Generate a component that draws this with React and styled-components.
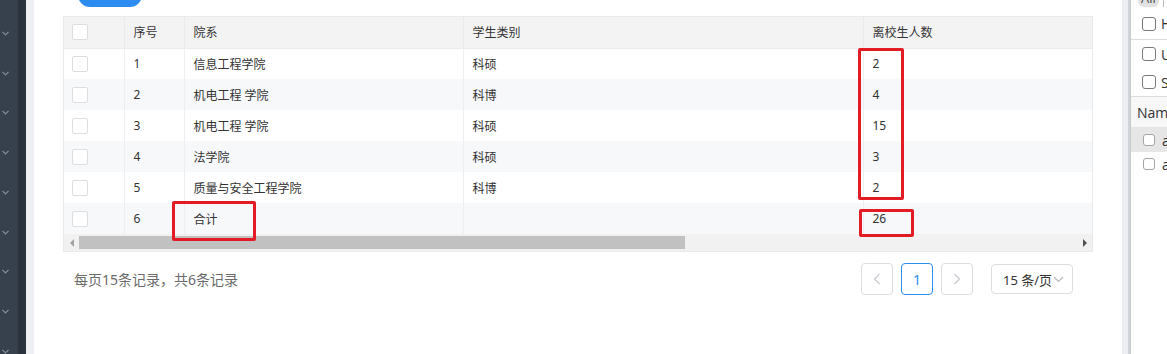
import React from 'react';
import styled, { createGlobalStyle } from 'styled-components';

const GlobalStyle = createGlobalStyle`
  html, body { margin: 0; padding: 0; background: #fff; }
  body { font-family: "Noto Sans", "Noto Sans CJK SC", sans-serif; color: #333; }
  * { box-sizing: border-box; }
`;

const Page = styled.div`
  display: flex;
  width: 1167px;
  height: 354px;
  overflow: hidden;
`;

const Sidebar = styled.aside`
  flex: none;
  width: 26px;
  display: flex;
  background: #36414d;
`;

const SideMenu = styled.div`
  width: 18px;
  display: flex;
  flex-direction: column;
  padding: 31px 0 0 1px;
  gap: 34.5px;
`;

const SideEdge = styled.div`
  width: 8px;
  background: #2b333e;
`;

const Gutter = styled.div`
  flex: none;
  width: 8px;
  background: #eef0f4;
`;

const Main = styled.main`
  flex: none;
  width: 1088px;
  padding: 0 29px;
  background: #fff;
`;

const Toolbar = styled.div`
  height: 8px;
  display: flex;
  padding-left: 15px;
`;

const PrimaryButton = styled.button`
  margin-top: -25px;
  width: 64px;
  height: 32px;
  border: none;
  border-radius: 12px;
  background: #2d8cf0;
`;

const TableWrap = styled.div`
  position: relative;
  margin-top: 8px;
  width: 1030px;
  border: 1px solid #e8eaec;
`;

const Viewport = styled.div`
  width: 100%;
  overflow: hidden;
`;

const Table = styled.table`
  width: 1713px;
  table-layout: fixed;
  border-collapse: collapse;
  font-size: 12px;
  color: #333;
`;

const HeadCell = styled.th`
  height: 31px;
  padding: 0 0 0 ${(p) => (p.$check ? 8 : 9)}px;
  text-align: left;
  font-weight: 400;
  background: #f3f3f3;
  border-right: 1px solid #e8eaec;
  border-bottom: 1px solid #e8eaec;
  white-space: nowrap;
`;

const Row = styled.tr`
  background: ${(p) => (p.$striped ? '#f7f8fa' : '#fff')};
`;

const Cell = styled.td`
  height: 31px;
  padding: 0 0 0 ${(p) => (p.$check ? 8 : 9)}px;
  border-right: 1px solid #eceef1;
  white-space: nowrap;
  vertical-align: middle;
`;

const Check = styled.span`
  display: block;
  width: 16px;
  height: 16px;
  border: 1px solid #dcdee2;
  border-radius: 2px;
  background: #fff;
`;

const ScrollBar = styled.div`
  display: flex;
  height: 17px;
  background: #f1f1f1;
`;

const ScrollArrow = styled.div`
  flex: none;
  width: 15px;
  display: flex;
  align-items: center;
  justify-content: center;
  &::before {
    content: '';
    width: 0;
    height: 0;
    border-top: 4px solid transparent;
    border-bottom: 4px solid transparent;
    ${(p) =>
      p.$dir === 'left'
        ? 'border-right: 4px solid #a3a3a3;'
        : 'border-left: 4px solid #505050;'}
  }
`;

const ScrollTrack = styled.div`
  flex: 1;
  display: flex;
  align-items: center;
`;

const ScrollThumb = styled.div`
  height: 13px;
  background: #c1c1c1;
`;

const Mark = styled.div`
  position: absolute;
  left: ${(p) => p.$x}px;
  top: ${(p) => p.$y}px;
  width: ${(p) => p.$w}px;
  height: ${(p) => p.$h}px;
  border: 3px solid #e21b25;
  border-radius: 2px;
  pointer-events: none;
`;

const Footer = styled.div`
  display: flex;
  align-items: center;
  justify-content: space-between;
  margin-top: 11px;
  padding: 0 20px 0 11px;
  height: 32px;
`;

const Summary = styled.span`
  font-size: 14px;
  color: #6b6b6b;
`;

const Pager = styled.div`
  display: flex;
  align-items: center;
  gap: 8px;
`;

const PageButton = styled.button`
  width: 32px;
  height: 32px;
  padding: 0;
  display: flex;
  align-items: center;
  justify-content: center;
  border: 1px solid ${(p) => (p.$active ? '#2d8cf0' : '#dcdee2')};
  border-radius: 4px;
  background: #fff;
  color: ${(p) => (p.$active ? '#2d8cf0' : '#c5c8ce')};
  font-family: "Noto Sans", sans-serif;
  font-size: 14px;
`;

const SizeSelect = styled.div`
  margin-left: 10px;
  width: 82px;
  height: 30px;
  display: flex;
  align-items: center;
  padding-left: 11px;
  gap: 1px;
  border: 1px solid #dcdee2;
  border-radius: 4px;
  font-size: 13px;
  color: #333;
`;

const RightGutter = styled.div`
  flex: none;
  width: 8px;
  background: #eceef2;
  border-right: 2px solid #d0d3d9;
`;

const RightPanel = styled.section`
  flex: 1;
  min-width: 0;
  overflow: hidden;
  background: #fff;
  border-left: 1px solid #c9c9c9;
  font-family: "Open Sans", "Noto Sans", sans-serif;
  font-size: 14px;
  color: #333;
`;

const TabBar = styled.div`
  height: 8px;
  display: flex;
  align-items: flex-start;
  padding-left: 7px;
  gap: 4px;
`;

const TabPill = styled.span`
  margin-top: -10px;
  height: 17px;
  padding: 0 3px;
  line-height: 17px;
  border-radius: 6px;
  background: #e2e2e2;
  font-size: 13px;
  color: #444;
`;

const TabSep = styled.span`
  width: 1px;
  height: 7px;
  background: #bbb;
`;

const FilterRow = styled.label`
  display: flex;
  align-items: center;
  gap: 5px;
  height: ${(p) => p.$h}px;
  padding-left: 11px;
  border-bottom: ${(p) => (p.$line ? '1px solid #dcdcdc' : 'none')};
  white-space: nowrap;
`;

const NativeBox = styled.span`
  flex: none;
  width: ${(p) => p.$size}px;
  height: ${(p) => p.$size}px;
  border: 1px solid ${(p) => p.$tone};
  border-radius: 3px;
  background: #fff;
`;

const ListHead = styled.div`
  height: 31px;
  display: flex;
  align-items: center;
  padding-left: 6px;
  background: #f7f7f7;
  border-bottom: 1px solid #e4e4e4;
`;

const ListRow = styled.div`
  height: 24px;
  display: flex;
  align-items: center;
  gap: 7px;
  padding-left: 12px;
  background: ${(p) => (p.$selected ? '#e6e6e6' : '#fff')};
`;

const Chevron = () => (
  <svg width="9" height="6" viewBox="0 0 9 6" fill="none">
    <path d="M1 1l3.5 3.5L8 1" stroke="#848c96" strokeWidth="1.5" />
  </svg>
);

const Arrow = ({ dir }) => (
  <svg width="8" height="12" viewBox="0 0 8 12" fill="none">
    <path
      d={dir === 'left' ? 'M6.5 1L1.5 6l5 5' : 'M1.5 1l5 5-5 5'}
      stroke="#c5c8ce"
      strokeWidth="1.2"
    />
  </svg>
);

const DownIcon = () => (
  <svg width="11" height="7" viewBox="0 0 11 7" fill="none">
    <path d="M1 1l4.5 4.5L10 1" stroke="#b5b8be" strokeWidth="1.1" />
  </svg>
);

const rows = [
  { no: 1, dept: '信息工程学院', type: '科硕', count: '2' },
  { no: 2, dept: '机电工程 学院', type: '科博', count: '4' },
  { no: 3, dept: '机电工程 学院', type: '科硕', count: '15' },
  { no: 4, dept: '法学院', type: '科硕', count: '3' },
  { no: 5, dept: '质量与安全工程学院', type: '科博', count: '2' },
  { no: 6, dept: '合计', type: '', count: '26' },
];

export default function App() {
  return (
    <>
      <GlobalStyle />
      <Page>
        <Sidebar>
          <SideMenu>
            {Array.from({ length: 9 }).map((_, i) => (
              <Chevron key={i} />
            ))}
          </SideMenu>
          <SideEdge />
        </Sidebar>
        <Gutter />
        <Main>
          <Toolbar>
            <PrimaryButton aria-label="新增" />
          </Toolbar>
          <TableWrap>
            <Viewport>
              <Table>
                <colgroup>
                  <col style={{ width: 60 }} />
                  <col style={{ width: 60 }} />
                  <col style={{ width: 279 }} />
                  <col style={{ width: 400 }} />
                  <col />
                </colgroup>
                <thead>
                  <tr>
                    <HeadCell $check>
                      <Check />
                    </HeadCell>
                    <HeadCell>序号</HeadCell>
                    <HeadCell>院系</HeadCell>
                    <HeadCell>学生类别</HeadCell>
                    <HeadCell>离校生人数</HeadCell>
                  </tr>
                </thead>
                <tbody>
                  {rows.map((r, i) => (
                    <Row key={r.no} $striped={i % 2 === 1}>
                      <Cell $check>
                        <Check />
                      </Cell>
                      <Cell>{r.no}</Cell>
                      <Cell>{r.dept}</Cell>
                      <Cell>{r.type}</Cell>
                      <Cell>{r.count}</Cell>
                    </Row>
                  ))}
                </tbody>
              </Table>
            </Viewport>
            <ScrollBar>
              <ScrollArrow $dir="left" />
              <ScrollTrack>
                <ScrollThumb style={{ width: 606 }} />
              </ScrollTrack>
              <ScrollArrow $dir="right" />
            </ScrollBar>
            <Mark $x={794} $y={31} $w={46} $h={152} />
            <Mark $x={795} $y={192} $w={55} $h={28} />
            <Mark $x={108} $y={184} $w={84} $h={40} />
          </TableWrap>
          <Footer>
            <Summary>每页15条记录，共6条记录</Summary>
            <Pager>
              <PageButton aria-label="上一页">
                <Arrow dir="left" />
              </PageButton>
              <PageButton $active>1</PageButton>
              <PageButton aria-label="下一页">
                <Arrow dir="right" />
              </PageButton>
              <SizeSelect>
                15 条/页
                <DownIcon />
              </SizeSelect>
            </Pager>
          </Footer>
        </Main>
        <RightGutter />
        <RightPanel>
          <TabBar>
            <TabPill>All</TabPill>
            <TabSep />
          </TabBar>
          <FilterRow $h={32} $line>
            <NativeBox $size={14} $tone="#7a7a7a" />H
          </FilterRow>
          <FilterRow $h={28}>
            <NativeBox $size={14} $tone="#7a7a7a" />U
          </FilterRow>
          <FilterRow $h={29} $line>
            <NativeBox $size={14} $tone="#7a7a7a" />S
          </FilterRow>
          <ListHead>Name</ListHead>
          <ListRow $selected>
            <NativeBox $size={12} $tone="#a5a5a5" />a
          </ListRow>
          <ListRow>
            <NativeBox $size={12} $tone="#a5a5a5" />a
          </ListRow>
        </RightPanel>
      </Page>
    </>
  );
}
